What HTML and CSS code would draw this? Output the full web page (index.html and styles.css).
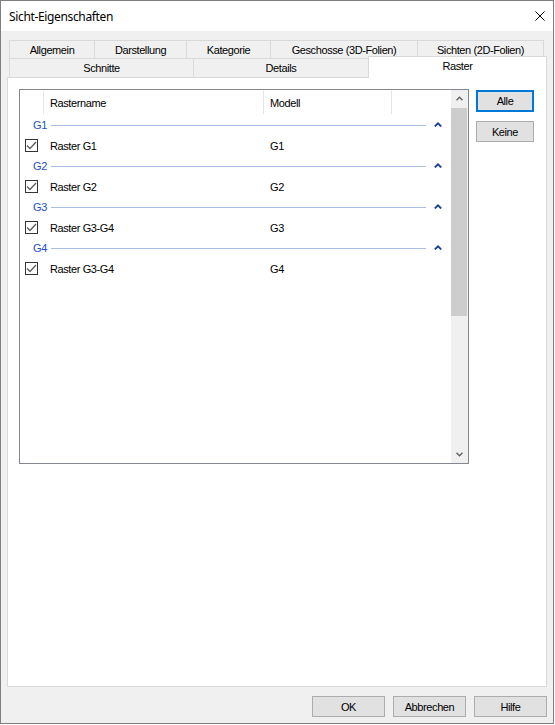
FILE: index.html
```html
<!DOCTYPE html>
<html lang="de">
<head>
  <meta charset="UTF-8" />
  <title>Sicht-Eigenschaften</title>
  <link rel="stylesheet" href="styles.css">
</head>
<body>
  <div class="window">
    <div class="titlebar">
      <span class="title">Sicht-Eigenschaften</span>
      <svg class="close" width="10" height="10" viewBox="0 0 10 10">
        <path d="M0.5 0.5 L9.5 9.5 M9.5 0.5 L0.5 9.5" stroke="#000" stroke-width="1" fill="none"/>
      </svg>
    </div>

    <div class="client">
      <div class="tabs">
        <div class="tab-row back">
          <div class="tab tab-allgemein">Allgemein</div>
          <div class="tab tab-darstellung">Darstellung</div>
          <div class="tab tab-kategorie">Kategorie</div>
          <div class="tab tab-geschosse">Geschosse (3D-Folien)</div>
          <div class="tab tab-sichten">Sichten (2D-Folien)</div>
        </div>
        <div class="tab-row front">
          <div class="tab tab-schnitte">Schnitte</div>
          <div class="tab tab-details">Details</div>
          <div class="tab tab-raster active">Raster</div>
        </div>
      </div>

      <div class="panel">
        <div class="listview">
          <div class="list-body">
            <div class="list-header">
              <div class="hcell col-check"></div>
              <div class="hcell col-name">Rastername</div>
              <div class="hcell col-model">Modell</div>
            </div>

            <div class="group">
              <span class="group-label">G1</span>
              <span class="group-rule"></span>
              <svg class="collapse" width="8" height="5" viewBox="0 0 8 5"><polyline points="0.8,4.5 4,1.3 7.2,4.5" /></svg>
            </div>
            <div class="item">
              <div class="col-check"><svg class="checkbox" width="13" height="13" viewBox="0 0 13 13"><rect x="0.5" y="0.5" width="12" height="12" /><polyline points="2,6.5 5,9.5 11,3" /></svg></div>
              <div class="col-name">Raster G1</div>
              <div class="col-model">G1</div>
            </div>

            <div class="group">
              <span class="group-label">G2</span>
              <span class="group-rule"></span>
              <svg class="collapse" width="8" height="5" viewBox="0 0 8 5"><polyline points="0.8,4.5 4,1.3 7.2,4.5" /></svg>
            </div>
            <div class="item">
              <div class="col-check"><svg class="checkbox" width="13" height="13" viewBox="0 0 13 13"><rect x="0.5" y="0.5" width="12" height="12" /><polyline points="2,6.5 5,9.5 11,3" /></svg></div>
              <div class="col-name">Raster G2</div>
              <div class="col-model">G2</div>
            </div>

            <div class="group">
              <span class="group-label">G3</span>
              <span class="group-rule"></span>
              <svg class="collapse" width="8" height="5" viewBox="0 0 8 5"><polyline points="0.8,4.5 4,1.3 7.2,4.5" /></svg>
            </div>
            <div class="item">
              <div class="col-check"><svg class="checkbox" width="13" height="13" viewBox="0 0 13 13"><rect x="0.5" y="0.5" width="12" height="12" /><polyline points="2,6.5 5,9.5 11,3" /></svg></div>
              <div class="col-name">Raster G3-G4</div>
              <div class="col-model">G3</div>
            </div>

            <div class="group">
              <span class="group-label">G4</span>
              <span class="group-rule"></span>
              <svg class="collapse" width="8" height="5" viewBox="0 0 8 5"><polyline points="0.8,4.5 4,1.3 7.2,4.5" /></svg>
            </div>
            <div class="item">
              <div class="col-check"><svg class="checkbox" width="13" height="13" viewBox="0 0 13 13"><rect x="0.5" y="0.5" width="12" height="12" /><polyline points="2,6.5 5,9.5 11,3" /></svg></div>
              <div class="col-name">Raster G3-G4</div>
              <div class="col-model">G4</div>
            </div>
          </div>

          <div class="scrollbar">
            <div class="sb-btn">
              <svg width="7" height="5" viewBox="0 0 7 5"><polyline points="0.5,4.2 3.5,1.2 6.5,4.2" /></svg>
            </div>
            <div class="sb-thumb"></div>
            <div class="sb-track"></div>
            <div class="sb-btn">
              <svg width="7" height="5" viewBox="0 0 7 5"><polyline points="0.5,0.8 3.5,3.8 6.5,0.8" /></svg>
            </div>
          </div>
        </div>

        <div class="side-buttons">
          <button class="btn default">Alle</button>
          <button class="btn">Keine</button>
        </div>
      </div>

      <div class="footer">
        <button class="btn">OK</button>
        <button class="btn">Abbrechen</button>
        <button class="btn">Hilfe</button>
      </div>
    </div>
  </div>
</body>
</html>
```

FILE: styles.css
```css
body {
  margin: 0;
  background: #fff;
  font-family: "Liberation Sans", Arial, sans-serif;
  font-size: 11px;
  letter-spacing: -0.4px;
  color: #000;
}

.window {
  width: 554px;
  height: 724px;
  box-sizing: border-box;
  border: 1px solid #7f7f7f;
  background: #f0f0f0;
  display: flex;
  flex-direction: column;
}

/* title bar */

.titlebar {
  height: 30px;
  flex-shrink: 0;
  background: #fff;
  display: flex;
  align-items: center;
  justify-content: space-between;
  padding: 0 8px;
}

.title {
  font-family: "Noto Sans", sans-serif;
  font-size: 12px;
  letter-spacing: -0.35px;
}

.close {
  display: block;
}

.client {
  flex: 1;
  display: flex;
  flex-direction: column;
  padding: 9px 6px 0 6px;
}

/* tabs */

.tabs {
  margin-left: 2px;
}

.tab-row {
  display: flex;
}

.tab-row.back {
  height: 18px;
}

.tab-row.front {
  height: 19px;
  align-items: flex-end;
}

.tab {
  box-sizing: border-box;
  border-top: 1px solid #d9d9d9;
  border-left: 1px solid #d9d9d9;
  display: flex;
  align-items: center;
  justify-content: center;
  white-space: nowrap;
}

.back .tab {
  height: 18px;
}

.front .tab {
  height: 19px;
}

.tab-allgemein { width: 85px; }
.tab-darstellung { width: 92px; }
.tab-kategorie { width: 84px; }
.tab-geschosse { width: 147px; }
.tab-sichten {
  width: 127px;
  border-right: 1px solid #d9d9d9;
}

.tab-schnitte { width: 184px; }
.tab-details { width: 175px; }
.tab-raster { width: 179px; }

.front .tab.active {
  height: 22px;
  margin-bottom: -1px;
  padding-top: 3px;
  align-items: flex-start;
  background: #fff;
  border-right: 1px solid #d9d9d9;
  position: relative;
  z-index: 1;
}

/* tab page */

.panel {
  height: 610px;
  box-sizing: border-box;
  border: 1px solid #d9d9d9;
  background: #fff;
  padding: 11px;
  display: flex;
  align-items: flex-start;
  gap: 7px;
}

.listview {
  width: 450px;
  height: 375px;
  box-sizing: border-box;
  border: 1px solid #828790;
  display: flex;
}

.list-body {
  flex: 1;
}

.list-header {
  height: 25px;
  display: flex;
}

.hcell {
  box-sizing: border-box;
  margin: 1px 0;
  border-right: 1px solid #e5e5e5;
  display: flex;
  align-items: center;
}

.col-check {
  width: 24px;
  flex-shrink: 0;
  box-sizing: border-box;
}

.col-name {
  width: 220px;
  flex-shrink: 0;
  box-sizing: border-box;
  padding-left: 6px;
}

.col-model {
  width: 128px;
  flex-shrink: 0;
  box-sizing: border-box;
  padding-left: 6px;
}

.group {
  height: 20px;
  display: flex;
  align-items: center;
  padding: 0 9px 0 13px;
  color: #1c4fc6;
}

.group-label {
  width: 18px;
  flex-shrink: 0;
}

.group-rule {
  flex: 1;
  height: 1px;
  background: #aabde6;
  margin-right: 8px;
}

.collapse {
  display: block;
  margin-top: -1px;
}

.collapse polyline {
  fill: none;
  stroke: #1f3f95;
  stroke-width: 1.8;
}

.item {
  height: 21px;
  display: flex;
  align-items: center;
}

.item .col-check {
  padding-left: 5px;
}

.checkbox {
  display: block;
}

.checkbox rect {
  fill: #fff;
  stroke: #333;
  stroke-width: 1;
}

.checkbox polyline {
  fill: none;
  stroke: #5c5c5c;
  stroke-width: 1.3;
}

/* vertical scroll bar */

.scrollbar {
  width: 17px;
  flex-shrink: 0;
  background: #f0f0f0;
  display: flex;
  flex-direction: column;
}

.sb-btn {
  height: 17px;
  display: flex;
  align-items: center;
  justify-content: center;
}

.sb-btn svg {
  display: block;
}

.sb-btn polyline {
  fill: none;
  stroke: #606060;
  stroke-width: 1.4;
}

.sb-thumb {
  height: 208px;
  margin: 1px 1px 0 0;
  background: #cdcdcd;
}

.sb-track {
  flex: 1;
}

/* buttons */

.btn {
  box-sizing: border-box;
  height: 21px;
  padding: 0;
  border: 1px solid #adadad;
  background: #e1e1e1;
  font: inherit;
  letter-spacing: inherit;
  color: #000;
}

.btn.default {
  height: 22px;
  border: 2px solid #0078d7;
}

.side-buttons {
  width: 58px;
  margin-top: 1px;
  display: flex;
  flex-direction: column;
  gap: 9px;
}

.side-buttons .btn {
  width: 58px;
}

.footer {
  display: flex;
  justify-content: flex-end;
  gap: 8px;
  padding-top: 9px;
}

.footer .btn {
  width: 73px;
}
```
